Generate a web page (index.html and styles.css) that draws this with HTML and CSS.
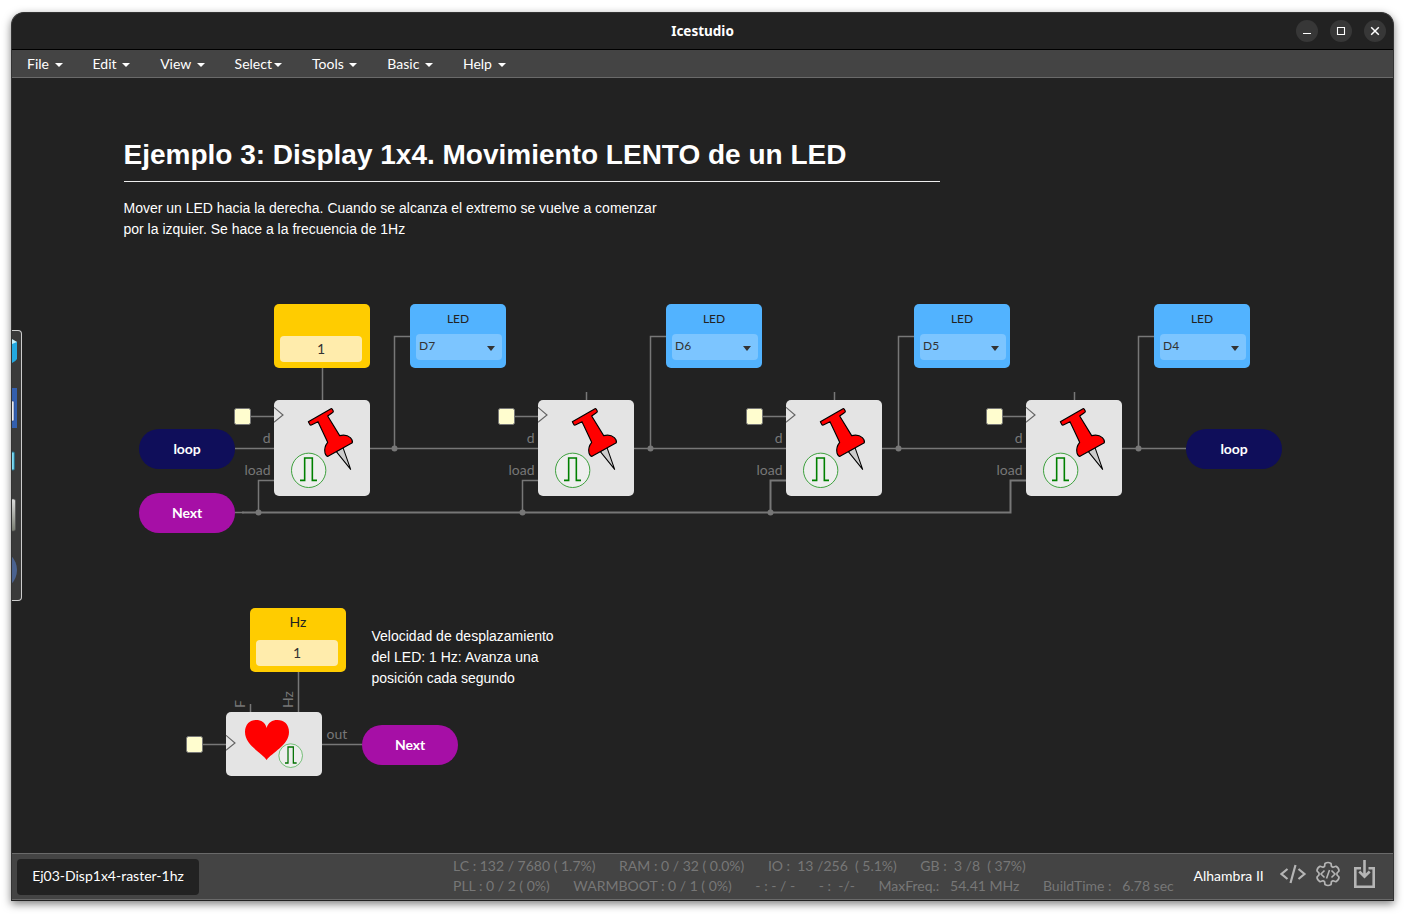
FILE: index.html
```html
<!DOCTYPE html>
<html lang="es">
<head>
<meta charset="utf-8">
<title>Icestudio</title>
<link rel="stylesheet" href="styles.css">
</head>
<body>
<svg class="defs" aria-hidden="true">
  <symbol id="register" viewBox="0 0 288 288">
    <circle cx="104" cy="211" r="51.5" fill="#eee" stroke="#2f9a2f" stroke-width="2.8"/>
    <path d="M78 241H92V174H115V241H129" fill="none" stroke="#008000" stroke-width="4.800"/>
    <path d="M187 155L230 208L207 143Z" fill="#ccc" stroke="#000" stroke-width="3.200" stroke-linejoin="round"/>
    <path d="M103 65L171 26Q174 25 175 28L178 34Q178 37 175 38L161 48L197 107Q217 102 229 113Q237 121 235 128L162 169Q157 170 153 159Q149 142 161 127L132 65L112 75Q109 76 107 73Z" fill="#f00" stroke="#000" stroke-width="3.4" stroke-linejoin="round"/>
    <path d="M0 22L27 45L0 67" fill="none" stroke="#666" stroke-width="3.500"/>
  </symbol>
  <symbol id="heart" viewBox="0 0 288 192">
    <path d="M122 144C108 122 57 100 57 60C57 37 72 24 90 24C106 24 118 32 122 48C126 32 139 24 154 24C174 24 189 37 189 60C189 100 137 122 122 144Z" fill="#f00"/>
    <circle cx="194" cy="131" r="35.5" fill="#eee" fill-opacity=".85" stroke="#4caf50" stroke-width="2.2"/>
    <path d="M177 153H186V105H202V153H212" fill="none" stroke="#007000" stroke-width="3.8"/>
    <path d="M0 70L27 93L0 115" fill="none" stroke="#666" stroke-width="3.500"/>
  </symbol>
</svg>
<div class="window">
  <header class="titlebar">
    <span class="title">Icestudio</span>
    <div class="controls">
      <span class="control"><svg viewBox="0 0 22 22"><path d="M7 13.5H15"/></svg></span>
      <span class="control"><svg viewBox="0 0 22 22"><path d="M7.5 7.5H14.5V14.5H7.5Z"/></svg></span>
      <span class="control"><svg viewBox="0 0 22 22"><path d="M7.2 7.2L14.8 14.8M14.8 7.2L7.2 14.8" stroke-width="1.5"/></svg></span>
    </div>
  </header>
  <nav class="menu">
    <span class="menu-item">File <i class="caret"></i></span>
    <span class="menu-item">Edit <i class="caret"></i></span>
    <span class="menu-item">View <i class="caret"></i></span>
    <span class="menu-item">Select<i class="caret"></i></span>
    <span class="menu-item">Tools <i class="caret"></i></span>
    <span class="menu-item">Basic <i class="caret"></i></span>
    <span class="menu-item">Help <i class="caret"></i></span>
  </nav>
  <main class="canvas">
    <svg class="wires" viewBox="12 78 1381 775">
      <g class="thin">
        <path d="M322.5 368V400M235 448.5H274M370 448.5H538M634 448.5H786M882 448.5H1026M1122 448.5H1186"/>
        <path d="M394.5 448.5V336.5H410M650.5 448.5V336.5H666M898.5 448.5V336.5H914M1138.5 448.5V336.5H1154"/>
        <path d="M250 416.5H274M514 416.5H538M762 416.5H786M1002 416.5H1026"/>
        <path d="M586.5 392V400M834.5 392V400M1074.5 392V400"/>
        <path d="M258.5 512V480.5H274M522.5 512V480.5H538M235 512.5H244"/>
        <path d="M298.5 672V712M250.5 704V712M202 744.5H226M322 744.5H362"/>
      </g>
      <path class="bus" d="M242 512.5H1010.5V480.5H1026M770.5 512V480.5H786"/>
      <g class="joints">
        <circle cx="394.5" cy="448.5" r="3"/><circle cx="650.5" cy="448.5" r="3"/><circle cx="898.5" cy="448.5" r="3"/><circle cx="1138.5" cy="448.5" r="3"/>
        <circle cx="258.5" cy="512.5" r="3"/><circle cx="522.5" cy="512.5" r="3"/><circle cx="770.5" cy="512.5" r="3"/>
      </g>
      <g class="clocks">
        <rect x="234.5" y="408.5" width="16" height="16" rx="2"/><rect x="498.5" y="408.5" width="16" height="16" rx="2"/><rect x="746.5" y="408.5" width="16" height="16" rx="2"/><rect x="986.5" y="408.5" width="16" height="16" rx="2"/><rect x="186.5" y="736.5" width="16" height="16" rx="2"/>
      </g>
      <g class="ports">
        <text x="270.500" y="443">d</text><text x="270.500" y="475">load</text>
        <text x="534.500" y="443">d</text><text x="534.500" y="475">load</text>
        <text x="782.500" y="443">d</text><text x="782.500" y="475">load</text>
        <text x="1022.500" y="443">d</text><text x="1022.500" y="475">load</text>
        <text x="347.300" y="739">out</text>
        <text class="start" transform="translate(245 708) rotate(-90)">F</text>
        <text class="start" transform="translate(293 708) rotate(-90)">Hz</text>
      </g>
    </svg>
    <section class="note intro">
      <h1>Ejemplo 3: Display 1x4. Movimiento LENTO de un LED</h1>
      <p>Mover un LED hacia la derecha. Cuando se alcanza el extremo se vuelve a comenzar<br>por la izquier. Se hace a la frecuencia de 1Hz</p>
    </section>
    <p class="note speed">Velocidad de desplazamiento<br>del LED: 1 Hz: Avanza una<br>posición cada segundo</p>

    <div class="node constant init"><span class="label"></span><span class="value">1</span></div>
    <div class="node constant hz"><span class="label">Hz</span><span class="value">1</span></div>

    <div class="node led led-1"><span class="label">LED</span><span class="select">D7<i class="arrow"></i></span></div>
    <div class="node led led-2"><span class="label">LED</span><span class="select">D6<i class="arrow"></i></span></div>
    <div class="node led led-3"><span class="label">LED</span><span class="select">D5<i class="arrow"></i></span></div>
    <div class="node led led-4"><span class="label">LED</span><span class="select">D4<i class="arrow"></i></span></div>

    <svg class="node block reg-1"><use href="#register"/></svg>
    <svg class="node block reg-2"><use href="#register"/></svg>
    <svg class="node block reg-3"><use href="#register"/></svg>
    <svg class="node block reg-4"><use href="#register"/></svg>
    <svg class="node block pump"><use href="#heart"/></svg>

    <div class="node pill navy loop-in">loop</div>
    <div class="node pill navy loop-out">loop</div>
    <div class="node pill purple next-in">Next</div>
    <div class="node pill purple next-out">Next</div>

    <aside class="dock">
      <svg viewBox="0 0 10 271">
        <defs><linearGradient id="grey" x2="0" y2="1"><stop stop-color="#ddd"/><stop offset="1" stop-color="#777b70"/></linearGradient></defs>
        <path d="M0 10L5 12V29Q4 31 0 33Z" fill="#23a9e1"/><path d="M0 9L5 12L0 14Z" fill="#c7f1fb"/>
        <path d="M0 58H5V98H0Z" fill="#335fae"/><rect x="-3" y="71" width="5" height="20" rx="1" fill="#eee" stroke="#26438a" stroke-width=".6"/>
        <rect x="-3" y="122" width="5.300" height="18" rx="1" fill="#7edcf5" stroke="#24708a"/>
        <rect x="-5" y="169" width="8.500" height="32" rx="2" fill="url(#grey)" stroke="#555" stroke-width=".7"/>
        <circle cx="-15" cy="240" r="20" fill="#4a628f"/>
      </svg>
    </aside>
  </main>
  <footer class="footer">
    <span class="tab">Ej03-Disp1x4-raster-1hz</span>
    <div class="stats">
      <div class="row"><span>LC : 132 / 7680 ( 1.7%)</span><span>RAM : 0 / 32 ( 0.0%)</span><span>IO :  13 /256  ( 5.1%)</span><span>GB :  3 /8  ( 37%)</span></div>
      <div class="row"><span>PLL : 0 / 2 ( 0%)</span><span>WARMBOOT : 0 / 1 ( 0%)</span><span>- : - / -</span><span>- :  -/-</span><span>MaxFreq.:   54.41 MHz</span><span>BuildTime :   6.78 sec</span></div>
    </div>
    <span class="board">Alhambra II</span>
    <svg class="tools" viewBox="1280 858 96 32">
      <g fill="none" stroke="#b5b5b5" stroke-width="2.200">
        <path d="M1287.500 869L1281.500 874L1287.500 879M1298.500 869L1304.500 874L1298.500 879M1295.500 865L1290.500 883"/>
        <path stroke-width="1.700" stroke-linejoin="round" d="M1325 863.500Q1328 861.500 1331 863.500L1331.500 866.500L1333 867.300L1336 866.300Q1339 868 1339 871L1337 873V875L1339 877Q1339 880 1336 881.700L1333 880.700L1331.500 881.500L1331 884.500Q1328 886.500 1325 884.500L1324.500 881.500L1323 880.700L1320 881.700Q1317 880 1317 877L1319 875V873L1317 871Q1317 868 1320 866.300L1323 867.300L1324.500 866.500Z"/>
        <path stroke-width="1.600" d="M1324.500 870.500L1321 874L1324.500 877.500M1331.500 870.500L1335 874L1331.500 877.500M1329.500 870L1326.500 878.500"/>
        <path stroke-width="2.600" d="M1361 868.300H1355.300V886.700H1373.700V868.300H1368.500M1364.500 860V876M1359.300 871.500L1364.500 876.700L1369.700 871.500"/>
      </g>
    </svg>
  </footer>
</div>
</body>
</html>
```
FILE: styles.css
```css
* { box-sizing: border-box; }
body {
  margin: 0;
  width: 1404px;
  height: 917px;
  padding: 12px 10px 16px 11px;
  overflow: hidden;
  background: #fff;
  font: 14px/20px Lato, sans-serif;
}
.defs { position: absolute; width: 0; height: 0; }
.window {
  display: flex;
  flex-direction: column;
  width: 1383px;
  height: 889px;
  border: 1px solid #333;
  border-bottom-color: #222;
  border-radius: 13px 13px 0 0;
  overflow: hidden;
  background: #222;
  box-shadow: 0 3px 9px rgba(0, 0, 0, .5);
}
.titlebar {
  display: grid;
  grid-template-columns: 1fr auto 1fr;
  align-items: center;
  flex: 0 0 37px;
  border-bottom: 1px solid #000;
}
.title {
  grid-column: 2;
  color: #fff;
  font: bold 13.5px/20px "Noto Sans", sans-serif;
}
.controls {
  display: flex;
  justify-content: flex-end;
  gap: 12px;
  padding-right: 7px;
}
.control {
  width: 22px;
  height: 22px;
  border-radius: 50%;
  background: #373737;
}
.control svg { display: block; fill: none; stroke: #fff; stroke-width: 1.1; }
.menu {
  display: flex;
  gap: 30px;
  flex: 0 0 28px;
  padding: 4px 15px 3px;
  border-bottom: 1px solid #6a6a6a;
  background: #444;
  color: #fff;
}
.menu-item { line-height: 20px; white-space: pre; }
.caret {
  display: inline-block;
  margin-left: 2px;
  vertical-align: middle;
  border: 4px solid transparent;
  border-top-color: #fff;
  border-bottom: 0;
}
.canvas { position: relative; flex: 0 0 775px; overflow: hidden; }
.wires { display: block; width: 1381px; height: 775px; }
.thin { fill: none; stroke: #777; stroke-width: 1.5; }
.bus { fill: none; stroke: #777; stroke-width: 2; }
.joints { fill: #777; }
.clocks { fill: #fffdcf; stroke: #777; }
.ports { fill: #777; font-size: 14px; text-anchor: end; }
.start { text-anchor: start; }

.note {
  position: absolute;
  margin: 0;
  color: #fff;
  font: 14px/21px "Liberation Sans", Arial, sans-serif;
  white-space: nowrap;
}
.note h1 {
  width: 816px;
  margin: 0 0 16px;
  padding-bottom: 9px;
  border-bottom: 1px solid #eee;
  font-size: 28px;
  line-height: 34px;
}
.note p { margin: 0; }
.intro { left: 111.500px; top: 60px; }
.speed { left: 359.500px; top: 548px; }

.node { position: absolute; width: 96px; }
.constant, .led { height: 64px; border-radius: 5px; color: #333; text-align: center; }
.constant { background: #fc0; padding: 4px 8px 6px 6px; }
.constant .label { display: block; height: 28px; padding-left: 2px; line-height: 20px; color: #222; }
.value { display: block; height: 26px; border-radius: 4px; background: #ffecac; line-height: 26px; }
.led { padding: 5px 4px 0 6px; background: #52b3ff; font-size: 12px; }
.led .label { display: block; height: 25px; padding-right: 2px; line-height: 20px; color: #222; }
.select {
  display: flex;
  justify-content: space-between;
  height: 26px;
  padding: 2px 7px 0 3px;
  border-radius: 4px;
  background: #7cc5ff;
  line-height: 20px;
}
.arrow { margin-top: 10px; height: 5px; border: 4px solid transparent; border-top: 5px solid #333; border-bottom: 0; }
.block { height: 96px; border-radius: 5px; background: #e4e4e4; }
.pill { height: 40px; border-radius: 20px; color: #fff; font-weight: bold; line-height: 40px; text-align: center; letter-spacing: -.1px; }
.navy { background: #0f0e5a; }
.purple { background: #a60fa6; }

.init { left: 262px; top: 226px; }
.hz { left: 238px; top: 530px; }
.led-1 { left: 398px; top: 226px; }
.led-2 { left: 654px; top: 226px; }
.led-3 { left: 902px; top: 226px; }
.led-4 { left: 1142px; top: 226px; }
.reg-1 { left: 262px; top: 322px; }
.reg-2 { left: 526px; top: 322px; }
.reg-3 { left: 774px; top: 322px; }
.reg-4 { left: 1014px; top: 322px; }
.pump { left: 214px; top: 634px; height: 64px; }
.loop-in { left: 127px; top: 351px; }
.loop-out { left: 1174px; top: 351px; }
.next-in { left: 127px; top: 415px; }
.next-out { left: 350px; top: 647px; }

.dock {
  position: absolute;
  left: 0;
  top: 252px;
  width: 10px;
  height: 271px;
  border: 1px solid #ccc;
  border-left: 0;
  border-radius: 0 4px 4px 0;
  background: #3a3a3a;
}
.dock svg { display: block; width: 10px; height: 271px; margin-top: -1px; }

.footer {
  display: flex;
  flex: 0 0 47px;
  border-top: 1px solid #6a6a6a;
  border-bottom: 1px solid #6a6a6a;
  background: #444;
  color: #fff;
}
.tab {
  width: 182px;
  height: 36px;
  margin: 5px 0 0 5px;
  border-radius: 4px;
  background: #222;
  line-height: 34px;
  text-align: center;
}
.stats { width: 740.500px; margin: 2px 0 0 254px; color: #777; }
.row { display: flex; gap: 23.600px; white-space: pre; }
.board { width: 86.500px; line-height: 44px; }
.tools { width: 96px; height: 32px; margin-top: 4px; }
```
